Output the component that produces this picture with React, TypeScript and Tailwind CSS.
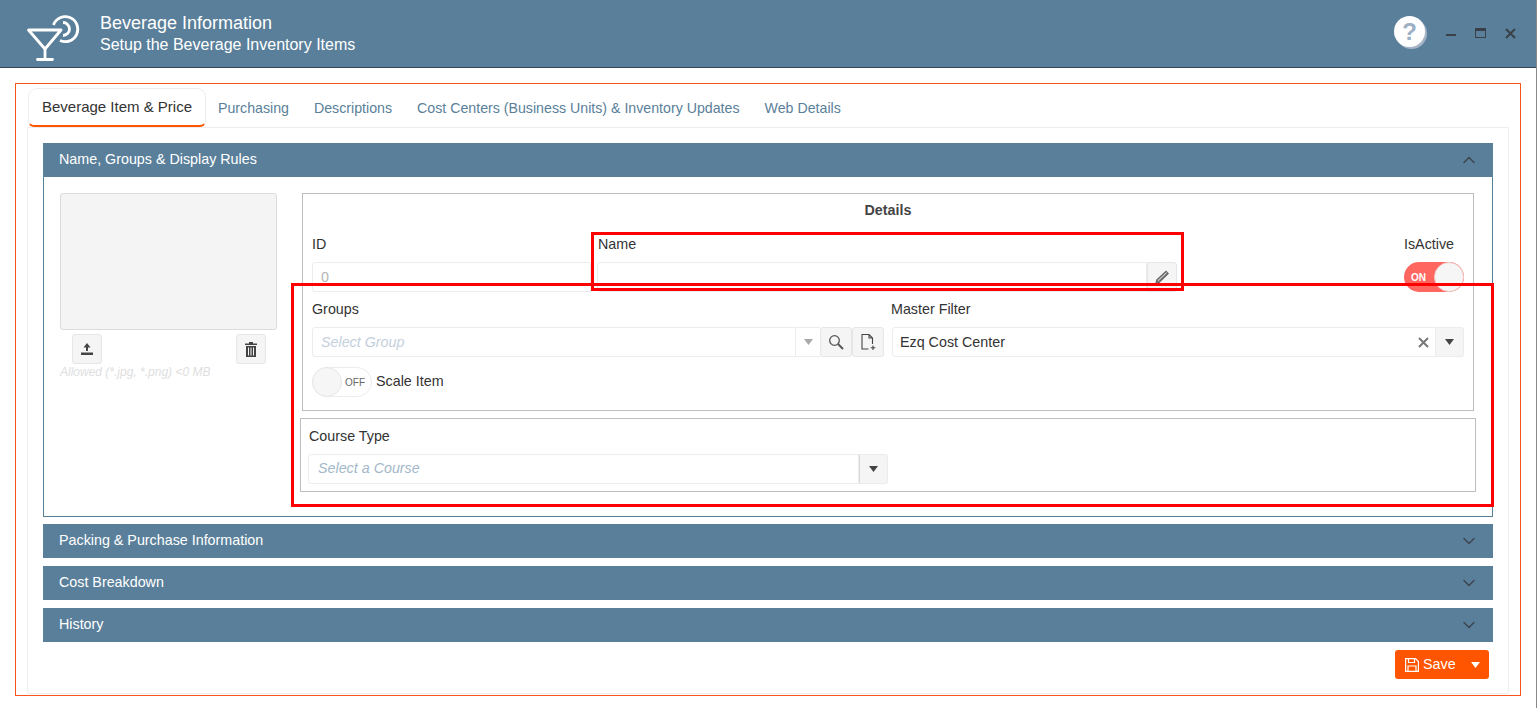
import { ChevronDown, ChevronUp } from 'lucide-react';

const sections = ['Packing & Purchase Information', 'Cost Breakdown', 'History'];
const tabs = ['Purchasing', 'Descriptions', 'Cost Centers (Business Units) & Inventory Updates', 'Web Details'];

function Logo() {
  return (
    <svg width="56" height="56" viewBox="0 0 56 56" fill="none" stroke="white" strokeWidth="2.8" className="shrink-0">
      <path d="M3.5 24 H36 L20 43 Z" strokeLinejoin="round" />
      <path d="M20 43 V53.5 M12.5 53.5 H27.5" strokeLinecap="round" />
      <path d="M28.5 19 A12.5 12.5 0 1 1 35 34.5" />
      <path d="M38 16.5 A6.5 6.5 0 0 1 38 29.5" />
    </svg>
  );
}

function Caret({ className = '' }: { className?: string }) {
  return (
    <svg width="9" height="6" viewBox="0 0 9 6" className={className}>
      <path d="M0 0 H9 L4.5 6 Z" fill="currentColor" />
    </svg>
  );
}

function AccordionHeader({ title, open = false }: { title: string; open?: boolean }) {
  const Icon = open ? ChevronUp : ChevronDown;
  return (
    <div className="flex h-[34px] items-center justify-between bg-[#5a7f9a] pb-px pl-4 pr-[14px] text-[14.3px] text-white">
      <span>{title}</span>
      <Icon size={20} strokeWidth={1.8} className="text-[#3f4650]" />
    </div>
  );
}

function IconButton({ children, className = '' }: { children: React.ReactNode; className?: string }) {
  return (
    <div className={`flex h-[30px] w-[30px] shrink-0 items-center justify-center rounded-[3px] border border-[#e6e6e6] bg-[#f5f5f5] text-[#444] ${className}`}>
      {children}
    </div>
  );
}

function ImagePanel() {
  return (
    <div className="w-[217px] shrink-0">
      <div className="h-[137px] rounded-[3px] border border-[#dcdcdc] bg-[#f4f4f4]" />
      <div className="mt-[4px] flex justify-between pl-3 pr-[11px]">
        <IconButton>
          <svg width="14" height="14" viewBox="0 0 14 14" fill="#444">
            <path d="M7 1 L10.5 5.5 H8 V9 H6 V5.5 H3.5 Z" />
            <rect x="1" y="10.5" width="12" height="2.5" />
          </svg>
        </IconButton>
        <IconButton>
          <svg width="12" height="15" viewBox="0 0 12 15" fill="#444">
            <path d="M4 0 H8 V1.5 H12 V3 H0 V1.5 H4 Z" />
            <path d="M1 4 H11 V15 H1 Z M3 5.5 V13.5 H4 V5.5 Z M5.5 5.5 V13.5 H6.5 V5.5 Z M8 5.5 V13.5 H9 V5.5 Z" fillRule="evenodd" />
          </svg>
        </IconButton>
      </div>
      <div className="text-[12px] italic leading-[16px] text-[#dedede]">Allowed (*.jpg, *.png) &lt;0 MB</div>
    </div>
  );
}

function DetailsPanel() {
  return (
    <div className="h-[218px] border border-[#bdbdbd] pl-[9px] pr-[9px]">
      <div className="mt-[7px] h-[18px] text-center text-[14.3px] font-bold leading-[18px] text-[#444]">Details</div>

      <div className="mt-[16px] flex h-[65px] text-[14.3px] text-[#333]">
        <div className="w-[279px] shrink-0">
          <div className="h-[18px] leading-[18px]">ID</div>
          <div className="mt-[9px] flex h-[30px] items-center rounded-l-[3px] border border-[#ececec] pl-2 pt-px text-[#b5b5b5]">0</div>
        </div>
        <div className="ml-[6px] w-[580px] shrink-0">
          <div className="h-[18px] pl-px leading-[18px]">Name</div>
          <div className="mt-[9px] flex h-[30px]">
            <div className="flex-1 rounded-l-[3px] border border-[#ececec]" />
            <IconButton className="w-[29px] rounded-l-none">
              <svg width="16" height="16" viewBox="0 0 16 16" fill="none" stroke="#666">
                <path d="M12 2.5 L14 4.5 L5 13.5 L2 14.5 L3 11 Z" strokeWidth="1.4" fill="#888" />
                <path d="M4 11.5 L12.5 3.5" stroke="#f5f5f5" strokeWidth=".8" />
              </svg>
            </IconButton>
          </div>
        </div>
        <div className="ml-auto w-[60px] shrink-0">
          <div className="h-[18px] whitespace-nowrap leading-[18px]">IsActive</div>
          <div className="mt-[9px] flex h-[30px] items-center rounded-full bg-[#ff6660] pl-[7px]">
            <span className="text-[10px] font-bold text-white">ON</span>
            <div className="ml-auto h-[30px] w-[30px] rounded-full border border-[#f0c8c6] bg-[#f6f6f6]" />
          </div>
        </div>
      </div>

      <div className="flex gap-2 text-[14.3px] text-[#333]">
        <div className="w-[572px] shrink-0">
          <div className="h-[18px] leading-[18px]">Groups</div>
          <div className="mt-[9px] flex h-[30px]">
            <div className="flex flex-1 items-center rounded-l-[3px] border border-[#ececec] pl-2 pt-px italic text-[#c3d0dc]">Select Group</div>
            <div className="flex w-[24px] items-center justify-center border-y border-[#ececec] text-[#a9a9a9]">
              <Caret />
            </div>
            <IconButton className="w-[32px]">
              <svg width="16" height="16" viewBox="0 0 16 16" fill="none" stroke="#555">
                <circle cx="6.5" cy="6.5" r="4.8" strokeWidth="1.3" />
                <path d="M10 10 L15 15" strokeWidth="2" />
              </svg>
            </IconButton>
            <IconButton className="w-[32px]">
              <svg width="16" height="18" viewBox="0 0 16 18" fill="none" stroke="#444" strokeWidth="1.1">
                <path d="M8.5 16 H2 V1.5 H9 L12.5 5 V11 M9 1.5 V5 H12.5 M13 12.5 V17 M10.7 14.7 H15.3" />
              </svg>
            </IconButton>
          </div>
        </div>
        <div className="flex-1">
          <div className="-ml-px h-[18px] leading-[18px]">Master Filter</div>
          <div className="mt-[9px] flex h-[30px]">
            <div className="flex flex-1 items-center justify-between rounded-l-[3px] border border-[#ececec] pl-[7px] pr-[6px] pt-px">
              <span>Ezq Cost Center</span>
              <svg width="11" height="11" viewBox="0 0 11 11" stroke="#777" strokeWidth="2">
                <path d="M1 1 L10 10 M10 1 L1 10" />
              </svg>
            </div>
            <div className="flex w-[28px] items-center justify-center rounded-r-[3px] border border-l-0 border-[#ececec] bg-[#f5f5f5] text-[#444]">
              <Caret />
            </div>
          </div>
        </div>
      </div>

      <div className="mt-[10px] flex h-[30px] items-center text-[14.3px] text-[#333]">
        <div className="flex h-[30px] w-[60px] items-center rounded-full border border-[#ececec]">
          <div className="-ml-px h-[30px] w-[30px] rounded-full border border-[#e6e6e6] bg-[#f6f6f6]" />
          <span className="ml-[3px] text-[10px] text-[#666]">OFF</span>
        </div>
        <span className="ml-[4px] -mt-[1px]">Scale Item</span>
      </div>
    </div>
  );
}

function CoursePanel() {
  return (
    <div className="-mx-[2px] mt-[7px] h-[74px] border border-[#bdbdbd] pl-[7px] text-[14.3px] text-[#333]">
      <div className="mt-[8px] h-[18px] pl-px leading-[18px]">Course Type</div>
      <div className="mt-[9px] flex h-[30px] w-[580px]">
        <div className="flex flex-1 items-center rounded-l-[3px] border border-[#ececec] pb-px pl-[9px] italic text-[#a3b8c9]">Select a Course</div>
        <div className="flex w-[29px] items-center justify-center rounded-r-[3px] border border-[#ececec] border-l-[#d9d9d9] bg-[#f5f5f5] text-[#444]">
          <Caret />
        </div>
      </div>
    </div>
  );
}

export default function App() {
  return (
    <div className="relative h-[708px] w-[1537px] overflow-hidden border-r border-[#8a8a8a] bg-white font-['Liberation_Sans',Arial,sans-serif]">
      <header className="flex h-[68px] items-center border-b border-[#36424c] bg-[#5a7f9a] pl-[25px] pr-[19px] text-white">
        <Logo />
        <div className="ml-[19px]">
          <div className="text-[18px] leading-[22px]">Beverage Information</div>
          <div className="text-[16px] leading-[22px]">Setup the Beverage Inventory Items</div>
        </div>
        <div className="ml-auto flex items-center text-[#3a4048]">
          <div className="flex h-[31px] w-[31px] -translate-y-[2px] items-center justify-center rounded-full bg-white text-[24px] font-bold leading-none text-[#9cb0c6] shadow-[2px_2px_0_#a6b5c6]">?</div>
          <div className="ml-[21px] mt-[3px] h-[2px] w-[10px] bg-[#3a4048]" />
          <div className="ml-[19px] -mt-[1px] h-[10px] w-[11px] border border-t-[3px] border-[#3a4048]" />
          <svg width="13" height="13" viewBox="0 0 13 13" stroke="#3a4048" strokeWidth="2" className="ml-[18px] -mt-[1px]">
            <path d="M2 2 L11 11 M11 2 L2 11" />
          </svg>
        </div>
      </header>

      <main className="ml-[15px] mt-[15px] h-[613px] w-[1506px] border border-solid border-[#f4561c] px-[11px] pt-[4px]">
        <nav className="flex h-[39px] items-stretch">
          <div className="ml-px flex h-[39px] w-[178px] items-center justify-center rounded-t-[9px] rounded-b-[6px] border border-b-[2px] border-[#ededed] border-b-[#ff5500] text-[15px] text-[#333]">
            Beverage Item &amp; Price
          </div>
          <div className="ml-[12px] flex items-center gap-[25px] pt-[2px] text-[14.2px] text-[#5a7f9a]">
            {tabs.map((t) => (
              <span key={t}>{t}</span>
            ))}
          </div>
        </nav>
        <div className="h-[567px] rounded-b-[3px] border border-[#ededed] px-[15px] pt-[15px]">
          <AccordionHeader title="Name, Groups & Display Rules" open />
          <div className="flex h-[340px] border border-t-0 border-[#5a7f9a] pl-4 pr-[18px] pt-4">
            <ImagePanel />
            <div className="ml-[25px] flex-1">
              <DetailsPanel />
              <CoursePanel />
            </div>
          </div>
          <div className="mt-[7px] flex flex-col gap-2">
            {sections.map((s) => (
              <AccordionHeader key={s} title={s} />
            ))}
          </div>
          <div className="mt-2 flex justify-end pr-[4px]">
            <div className="flex h-[29px] w-[94px] items-center rounded-[3px] bg-[#ff5500] pl-[10px] text-[14.3px] text-white">
              <svg width="14" height="14" viewBox="0 0 14 14" fill="none" stroke="white" strokeWidth="1.2">
                <path d="M.6.6 H10.5 L13.4 3.5 V13.4 H.6 Z M3.5.6 V4.5 H9.5 V.6 M3 13.4 V8 H11 V13.4" />
              </svg>
              <span className="ml-[4px]">Save</span>
              <Caret className="ml-auto mr-[9px]" />
            </div>
          </div>
        </div>
      </main>

      {/* annotation boxes drawn on top of the screenshot */}
      <div className="absolute left-[591px] top-[232px] h-[59px] w-[593px] border-[3px] border-[#ff0000]" />
      <div className="absolute left-[291px] top-[283px] h-[224px] w-[1203px] border-[3px] border-[#ff0000]" />
    </div>
  );
}
